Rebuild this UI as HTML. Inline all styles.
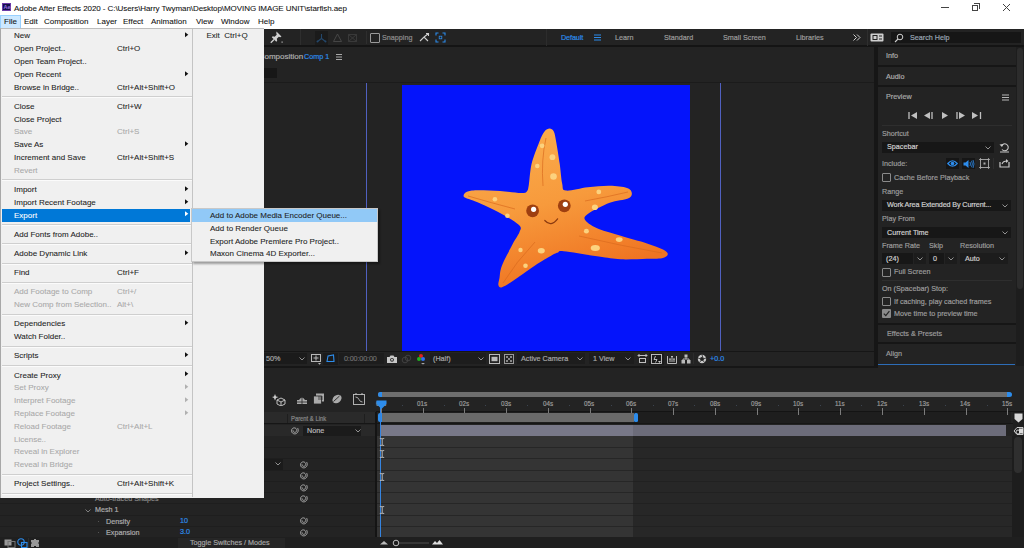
<!DOCTYPE html><html><head><meta charset="utf-8"><style>
*{margin:0;padding:0;box-sizing:border-box}
html,body{width:1024px;height:548px;overflow:hidden;background:#232323;font-family:"Liberation Sans",sans-serif;position:relative}
.a{position:absolute;white-space:nowrap}
.m{font-size:8px;line-height:10px;color:#1e1e1e;-webkit-text-stroke:0.08px currentColor}
.ae{font-size:8px;line-height:10px;color:#a0a0a0;transform:scaleX(.9);transform-origin:0 0;-webkit-text-stroke:0.2px currentColor}
.s7{font-size:7px;line-height:10px}
.bl{color:#2d8ceb}
</style></head><body><div class="a" style="left:0px;top:29px;width:1024px;height:17px;background:#232323;"></div>
<div class="a" style="left:0px;top:45px;width:1024px;height:1.6px;background:#141414;"></div>
<svg class="a" style="left:269px;top:30px;" width="15" height="14" viewBox="0 0 15 14"><path d="M7.5 1.5L12.5 6.5L11.3 7.2L9.8 6.8L7.8 8.8L8.2 10.8L7.3 11.7L2.8 7.2L3.7 6.3L5.7 6.7L7.7 4.7L7.3 3.2Z" fill="#cfcfcf"/><path d="M5 9.5L1.8 12.7" stroke="#cfcfcf" stroke-width="1.3"/><rect x="12.5" y="11.5" width="1.2" height="1.2" fill="#bbb"/></svg>
<div class="a" style="left:300px;top:29px;width:1px;height:16px;background:#2e2e2e;"></div>
<div class="a" style="left:315px;top:31px;width:13px;height:14px;background:#1b1b1b;"></div>
<svg class="a" style="left:316px;top:33px;" width="11" height="10" viewBox="0 0 11 10"><path d="M5.5 1V5.5M5.5 5.5L1.5 8.5M5.5 5.5L9.5 8.5" stroke="#24486c" stroke-width="1.1" fill="none"/><circle cx="1.5" cy="8.5" r="1" fill="#24486c"/><circle cx="9.5" cy="8.5" r="1" fill="#24486c"/></svg>
<svg class="a" style="left:332px;top:33px;" width="11" height="10" viewBox="0 0 11 10"><path d="M5.5 1L1.5 8.5H9.5Z" stroke="#4a4a4a" stroke-width="0.9" fill="none"/></svg>
<svg class="a" style="left:347px;top:33px;" width="11" height="10" viewBox="0 0 11 10"><path d="M1.5 1.5L9.5 8.5M9.5 1.5L1.5 8.5M1.5 1.5H9.5V8.5H1.5Z" stroke="#3c3c3c" stroke-width="0.9" fill="none"/></svg>
<div class="a" style="left:365.5px;top:31px;width:1px;height:13px;background:#2e2e2e;"></div>
<div class="a" style="left:370px;top:33px;width:10px;height:10px;background:transparent;border:1px solid #9a9a9a;border-radius:1px"></div>
<div class="a ae" style="left:382px;top:33.20px;color:#8e8e8e">Snapping</div>
<svg class="a" style="left:419px;top:32px;" width="11" height="11" viewBox="0 0 11 11"><path d="M1 9L5 5L9 9M5 5L9.5 1.5M7 1.5H9.5V4" stroke="#cfcfcf" stroke-width="1.1" fill="none"/></svg>
<svg class="a" style="left:435px;top:32px;" width="11" height="11" viewBox="0 0 11 11"><path d="M1 3.5V1H3.5M7.5 1H10V3.5M10 7.5V10H7.5M3.5 10H1V7.5" stroke="#2d8ceb" stroke-width="1.1" fill="none"/><rect x="4.2" y="4.2" width="2.6" height="2.6" fill="none" stroke="#2d8ceb" stroke-width="0.8"/></svg>
<div class="a" style="left:545.5px;top:29px;width:1px;height:16.5px;background:#2c2c2c;"></div>
<div class="a ae bl" style="left:561px;top:33.20px;letter-spacing:-0.1px">Default</div>
<svg class="a" style="left:594px;top:34px;" width="7" height="7" viewBox="0 0 7 7"><path d="M0 1H7M0 3.5H7M0 6H7" stroke="#2d8ceb" stroke-width="1"/></svg>
<div class="a ae" style="left:615px;top:33.20px;color:#9c9c9c">Learn</div>
<div class="a ae" style="left:664px;top:33.20px;color:#9c9c9c">Standard</div>
<div class="a ae" style="left:723px;top:33.20px;color:#9c9c9c">Small Screen</div>
<div class="a ae" style="left:796px;top:33.20px;color:#9c9c9c">Libraries</div>
<svg class="a" style="left:853px;top:34px;" width="8" height="7" viewBox="0 0 8 7"><path d="M0.5 0.5L3.5 3.5L0.5 6.5M4 0.5L7 3.5L4 6.5" stroke="#d0d0d0" stroke-width="1" fill="none"/></svg>
<div class="a" style="left:867px;top:29px;width:1px;height:16.5px;background:#2e2e2e;"></div>
<svg class="a" style="left:870px;top:33px;" width="14" height="9" viewBox="0 0 14 9"><rect x="0.5" y="0.5" width="13" height="8" rx="1" fill="#cfcfcf"/><rect x="3" y="2.5" width="4" height="4" fill="none" stroke="#232323" stroke-width="1"/><path d="M9 3H12M9 6H12" stroke="#232323"/></svg>
<div class="a" style="left:891px;top:32px;width:130px;height:11px;background:#161616;"></div>
<svg class="a" style="left:894px;top:33px;" width="10" height="10" viewBox="0 0 10 10"><circle cx="6" cy="4" r="2.8" fill="none" stroke="#cfcfcf" stroke-width="1"/><path d="M4 6L1 9" stroke="#cfcfcf" stroke-width="1.1"/></svg>
<div class="a ae" style="left:910px;top:33.20px;color:#9aa6b4">Search Help</div>
<div class="a" style="left:264px;top:47px;width:612px;height:304px;background:#232323;"></div>
<div class="a ae" style="left:258.7px;top:51.50px;color:#adadad;transform:none">Composition</div>
<div class="a ae bl" style="left:304px;top:51.50px;">Comp 1</div>
<svg class="a" style="left:336px;top:54px;" width="6" height="6" viewBox="0 0 6 6"><path d="M0 0.5H6M0 3H6M0 5.5H6" stroke="#b8b8b8" stroke-width="0.9"/></svg>
<div class="a" style="left:250px;top:68px;width:27px;height:10px;background:#171717;"></div>
<div class="a" style="left:264px;top:81.5px;width:612px;height:1.2px;background:#1b1b1b;"></div>
<div class="a" style="left:366px;top:83px;width:1px;height:268px;background:#5060c0;"></div>
<div class="a" style="left:720px;top:83px;width:1px;height:268px;background:#5060c0;"></div>
<div class="a" style="left:402px;top:85px;width:288px;height:266px;background:#0414fb;"></div>
<div class="a" style="left:0px;top:350.5px;width:876px;height:1.8px;background:#161616;"></div>
<div class="a" style="left:264px;top:352px;width:612px;height:14px;background:#232323;"></div>
<div class="a" style="left:250px;top:353px;width:57px;height:11px;background:#1b1b1b;"></div>
<div class="a ae" style="left:266px;top:353.50px;color:#a6a6a6">50%</div>
<svg class="a" style="left:299px;top:357px;" width="6" height="4" viewBox="0 0 6 4"><path d="M0.5 0.5L3 3L5.5 0.5" fill="none" stroke="#a0a0a0" stroke-width="0.9"/></svg>
<svg class="a" style="left:310px;top:353px;" width="13" height="12" viewBox="0 0 13 12"><rect x="1.5" y="1.5" width="9" height="7" fill="none" stroke="#b8b8b8" stroke-width="1"/><path d="M6 2.5V7.5M3.5 5H8.5" stroke="#b8b8b8" stroke-width="1"/><path d="M8 10H11L9.5 11.8Z" fill="#b8b8b8"/></svg>
<div class="a" style="left:323px;top:352.5px;width:15px;height:12px;background:#1b1b1b;"></div>
<svg class="a" style="left:325px;top:354px;" width="11" height="9" viewBox="0 0 11 9"><path d="M2 7.5L3 2L8.5 1L9 7.5Z" fill="none" stroke="#2d8ceb" stroke-width="1.1"/></svg>
<div class="a" style="left:339px;top:353px;width:45px;height:11px;background:#1d1d1d;"></div>
<div class="a ae" style="left:344px;top:353.50px;color:#6e6e6e;letter-spacing:-0.15px">0:00:00:00</div>
<svg class="a" style="left:386px;top:354px;" width="12" height="10" viewBox="0 0 12 10"><path d="M1 3H3.5L4.5 1.5H7.5L8.5 3H11V9H1Z" fill="#c8c8c8"/><circle cx="6" cy="5.8" r="1.9" fill="#232323"/><circle cx="6" cy="5.8" r="1" fill="#c8c8c8"/></svg>
<svg class="a" style="left:401px;top:354px;" width="11" height="10" viewBox="0 0 11 10"><circle cx="4" cy="6" r="2.8" fill="none" stroke="#444" stroke-width="0.9"/><circle cx="7" cy="4" r="2.8" fill="none" stroke="#444" stroke-width="0.9"/></svg>
<svg class="a" style="left:416px;top:353px;" width="10" height="12" viewBox="0 0 10 12"><circle cx="5" cy="3" r="2" fill="#e02020"/><circle cx="3" cy="6" r="2" fill="#20b020"/><circle cx="7" cy="6" r="2" fill="#3070f0"/><path d="M5 10H9L7 11.5Z" fill="#aaa"/></svg>
<div class="a" style="left:430px;top:353px;width:56px;height:11px;background:#1d1d1d;"></div>
<div class="a ae" style="left:433px;top:353.50px;color:#a6a6a6">(Half)</div>
<svg class="a" style="left:478px;top:357px;" width="6" height="4" viewBox="0 0 6 4"><path d="M0.5 0.5L3 3L5.5 0.5" fill="none" stroke="#a0a0a0" stroke-width="0.9"/></svg>
<svg class="a" style="left:489px;top:354px;" width="11" height="10" viewBox="0 0 11 10"><rect x="0.5" y="0.5" width="10" height="9" fill="none" stroke="#bbb" stroke-width="1"/><rect x="2.5" y="2.8" width="6" height="4.4" fill="#bbb"/></svg>
<svg class="a" style="left:504px;top:354px;" width="10" height="10" viewBox="0 0 10 10"><rect x="0.5" y="0.5" width="9" height="9" fill="none" stroke="#999" stroke-width="1"/><path d="M2 2h2v2h-2zM6 2h2v2h-2zM4 4h2v2h-2zM2 6h2v2h-2zM6 6h2v2h-2z" fill="#888"/></svg>
<div class="a" style="left:517px;top:353px;width:68px;height:11px;background:#1d1d1d;"></div>
<div class="a ae" style="left:521px;top:353.50px;color:#a6a6a6">Active Camera</div>
<svg class="a" style="left:577px;top:357px;" width="6" height="4" viewBox="0 0 6 4"><path d="M0.5 0.5L3 3L5.5 0.5" fill="none" stroke="#a0a0a0" stroke-width="0.9"/></svg>
<div class="a" style="left:589px;top:353px;width:45px;height:11px;background:#1d1d1d;"></div>
<div class="a ae" style="left:593px;top:353.50px;color:#a6a6a6">1 View</div>
<svg class="a" style="left:625px;top:357px;" width="6" height="4" viewBox="0 0 6 4"><path d="M0.5 0.5L3 3L5.5 0.5" fill="none" stroke="#a0a0a0" stroke-width="0.9"/></svg>
<svg class="a" style="left:637px;top:353px;" width="11" height="11" viewBox="0 0 11 11"><path d="M1 2.5H10M2.5 1L1 2.5L2.5 4M8.5 1L10 2.5L8.5 4" stroke="#c0c0c0" stroke-width="1" fill="none"/><rect x="2.5" y="5.5" width="6" height="4" fill="none" stroke="#c0c0c0" stroke-width="1"/></svg>
<div class="a" style="left:649px;top:352.5px;width:15px;height:12px;background:#1b1b1b;"></div>
<svg class="a" style="left:651px;top:354px;" width="11" height="10" viewBox="0 0 11 10"><rect x="0.5" y="0.5" width="10" height="9" fill="none" stroke="#c8c8c8" stroke-width="0.9"/><path d="M4.5 2L3 5.5H6L4.5 8.5" stroke="#c8c8c8" stroke-width="0.9" fill="none"/><path d="M7 7H10L8.5 9Z" fill="#c8c8c8"/></svg>
<svg class="a" style="left:667px;top:354px;" width="10" height="10" viewBox="0 0 10 10"><path d="M0.5 2V9.5H9.5V2M3 5V8M5 2.5V8M7 5V8" stroke="#bbb" stroke-width="1" fill="none"/><path d="M2 5H4M6 5H8M4 2.5H6" stroke="#bbb" stroke-width="1"/></svg>
<svg class="a" style="left:681px;top:354px;" width="10" height="10" viewBox="0 0 10 10"><rect x="3.5" y="0.5" width="3" height="3" fill="#bbb"/><rect x="0.5" y="6" width="3.5" height="3.5" fill="#bbb"/><rect x="6" y="6" width="3.5" height="3.5" fill="#bbb"/><path d="M5 3.5V5M2 6V5H8V6" stroke="#bbb" fill="none"/></svg>
<div class="a" style="left:693px;top:353px;width:1px;height:11px;background:#2c2c2c;"></div>
<svg class="a" style="left:697px;top:353.5px;" width="10" height="10" viewBox="0 0 10 10"><circle cx="5" cy="5" r="4.2" fill="#c8c8c8"/><circle cx="5" cy="5" r="2" fill="#232323"/><path d="M5 0.8L5.6 3M9 4L6.8 4.8M7.5 8.5L6 6.5M2.5 8.5L4 6.5M1 4L3.2 4.8" stroke="#232323" stroke-width="0.8"/></svg>
<div class="a ae bl" style="left:710px;top:353.50px;">+0.0</div>
<div class="a" style="left:0px;top:366px;width:876px;height:2px;background:#161616;"></div>
<div class="a" style="left:264px;top:368px;width:612px;height:0px;background:#232323;"></div>
<div class="a" style="left:874px;top:47px;width:4px;height:321px;background:#161616;"></div>
<div class="a" style="left:878px;top:47px;width:138px;height:18px;background:#232323;"></div>
<div class="a ae" style="left:886px;top:51.30px;color:#adadad">Info</div>
<div class="a" style="left:878px;top:65px;width:138px;height:1.5px;background:#161616;"></div>
<div class="a" style="left:878px;top:66.5px;width:138px;height:18.5px;background:#232323;"></div>
<div class="a ae" style="left:886px;top:71.50px;color:#adadad">Audio</div>
<div class="a" style="left:878px;top:85px;width:138px;height:1.5px;background:#161616;"></div>
<div class="a ae" style="left:886px;top:92.00px;color:#a8a8a8">Preview</div>
<svg class="a" style="left:1002px;top:94px;" width="7" height="7" viewBox="0 0 7 7"><path d="M0 1H7M0 3.5H7M0 6H7" stroke="#b8b8b8" stroke-width="1"/></svg>
<svg class="a" style="left:908px;top:111px;" width="76" height="9" viewBox="0 0 76 9"><path d="M1 1V8" stroke="#c0c0c0" stroke-width="1.3"/><path d="M9 1L3 4.5L9 8Z" fill="#c0c0c0"/><path d="M22 1L16 4.5L22 8Z" fill="#c0c0c0"/><path d="M24 1V8" stroke="#c0c0c0" stroke-width="1.3"/><path d="M34 1L40 4.5L34 8Z" fill="#c0c0c0"/><path d="M49 1V8" stroke="#c0c0c0" stroke-width="1.3"/><path d="M51 1L57 4.5L51 8Z" fill="#c0c0c0"/><path d="M64 1L70 4.5L64 8Z" fill="#c0c0c0"/><path d="M72.5 1V8" stroke="#c0c0c0" stroke-width="1.3"/></svg>
<div class="a" style="left:882px;top:125px;width:130px;height:1px;background:#2e2e2e;"></div>
<div class="a ae" style="left:882px;top:129.20px;color:#9c9c9c">Shortcut</div>
<div class="a" style="left:882px;top:142px;width:112px;height:11px;background:#171717;"></div>
<div class="a ae" style="left:887px;top:142.30px;color:#cfcfcf">Spacebar</div>
<svg class="a" style="left:985px;top:146px;" width="6" height="4" viewBox="0 0 6 4"><path d="M0.5 0.5L3 3L5.5 0.5" fill="none" stroke="#a0a0a0" stroke-width="0.9"/></svg>
<svg class="a" style="left:999px;top:142px;" width="11" height="11" viewBox="0 0 11 11"><path d="M2.5 4A3.5 3.5 0 1 1 3 7.5" stroke="#c8c8c8" stroke-width="1.1" fill="none"/><path d="M0.5 2.5L3 5L4.5 2Z" fill="#c8c8c8"/><path d="M1 10H10" stroke="#c8c8c8" stroke-width="1"/></svg>
<div class="a ae" style="left:882px;top:158.80px;color:#9c9c9c">Include:</div>
<div class="a" style="left:946px;top:158px;width:13px;height:11px;background:#161616;"></div>
<svg class="a" style="left:947px;top:159px;" width="11" height="9" viewBox="0 0 11 9"><path d="M0.8 4.5Q5.5 -1 10.2 4.5Q5.5 10 0.8 4.5Z" fill="none" stroke="#2d8ceb" stroke-width="1.2"/><circle cx="5.5" cy="4.6" r="1.8" fill="#2d8ceb"/></svg>
<div class="a" style="left:962px;top:158px;width:13px;height:11px;background:#161616;"></div>
<svg class="a" style="left:963px;top:158.5px;" width="12" height="10" viewBox="0 0 12 10"><path d="M0.5 3.5H2.5L5.5 1V9L2.5 6.5H0.5Z" fill="#2d8ceb"/><path d="M7 3Q8 5 7 7M8.5 1.8Q10.3 5 8.5 8.2M10 1Q12 5 10 9" stroke="#2d8ceb" stroke-width="0.8" fill="none"/></svg>
<svg class="a" style="left:979px;top:158px;" width="11" height="11" viewBox="0 0 11 11"><rect x="1.5" y="1.5" width="8" height="8" fill="none" stroke="#aaa" stroke-width="0.9"/><rect x="4.5" y="4.5" width="2" height="2" fill="#aaa"/><path d="M0 1.5H3M8 1.5H11M0 9.5H3M8 9.5H11M1.5 0V3M9.5 0V3M1.5 8V11M9.5 8V11" stroke="#aaa" stroke-width="0.8"/></svg>
<div class="a" style="left:993px;top:158px;width:1px;height:11px;background:#2e2e2e;"></div>
<svg class="a" style="left:999px;top:158px;" width="11" height="10" viewBox="0 0 11 10"><path d="M1 4V9H10V4" stroke="#c8c8c8" stroke-width="1.2" fill="none"/><path d="M3 6Q4 3 8 3" stroke="#c8c8c8" stroke-width="1.1" fill="none"/><path d="M7 1L9.5 3L7 5Z" fill="#c8c8c8"/></svg>
<div class="a" style="left:882px;top:173px;width:9px;height:9px;background:transparent;border:1px solid #8a8a8a;border-radius:1px"></div>
<div class="a ae" style="left:894px;top:172.50px;color:#9c9c9c">Cache Before Playback</div>
<div class="a ae" style="left:882px;top:187.00px;color:#9c9c9c">Range</div>
<div class="a" style="left:882px;top:200px;width:129px;height:10.5px;background:#171717;"></div>
<div class="a ae" style="left:887px;top:200.30px;color:#cfcfcf;letter-spacing:-0.15px">Work Area Extended By Current...</div>
<svg class="a" style="left:1002px;top:204px;" width="6" height="4" viewBox="0 0 6 4"><path d="M0.5 0.5L3 3L5.5 0.5" fill="none" stroke="#a0a0a0" stroke-width="0.9"/></svg>
<div class="a ae" style="left:882px;top:214.00px;color:#9c9c9c">Play From</div>
<div class="a" style="left:882px;top:227px;width:129px;height:11px;background:#171717;"></div>
<div class="a ae" style="left:887px;top:227.70px;color:#cfcfcf">Current Time</div>
<svg class="a" style="left:1002px;top:231px;" width="6" height="4" viewBox="0 0 6 4"><path d="M0.5 0.5L3 3L5.5 0.5" fill="none" stroke="#a0a0a0" stroke-width="0.9"/></svg>
<div class="a ae" style="left:882px;top:240.80px;color:#9c9c9c">Frame Rate</div>
<div class="a ae" style="left:929px;top:240.80px;color:#9c9c9c">Skip</div>
<div class="a ae" style="left:960px;top:240.80px;color:#9c9c9c">Resolution</div>
<div class="a" style="left:882px;top:253px;width:31px;height:11px;background:#171717;"></div>
<div class="a" style="left:914px;top:253px;width:12px;height:11px;background:#1c1c1c;"></div>
<div class="a ae" style="left:886px;top:253.50px;color:#cfcfcf">(24)</div>
<svg class="a" style="left:917px;top:257px;" width="6" height="4" viewBox="0 0 6 4"><path d="M0.5 0.5L3 3L5.5 0.5" fill="none" stroke="#a0a0a0" stroke-width="0.9"/></svg>
<div class="a" style="left:929px;top:253px;width:15px;height:11px;background:#171717;"></div>
<div class="a" style="left:945px;top:253px;width:12px;height:11px;background:#1c1c1c;"></div>
<div class="a ae" style="left:933px;top:253.50px;color:#cfcfcf">0</div>
<svg class="a" style="left:948px;top:257px;" width="6" height="4" viewBox="0 0 6 4"><path d="M0.5 0.5L3 3L5.5 0.5" fill="none" stroke="#a0a0a0" stroke-width="0.9"/></svg>
<div class="a" style="left:960px;top:253px;width:48px;height:11px;background:#1c1c1c;"></div>
<div class="a ae" style="left:965px;top:253.70px;color:#cfcfcf">Auto</div>
<svg class="a" style="left:999px;top:257px;" width="6" height="4" viewBox="0 0 6 4"><path d="M0.5 0.5L3 3L5.5 0.5" fill="none" stroke="#a0a0a0" stroke-width="0.9"/></svg>
<div class="a" style="left:882px;top:268px;width:9px;height:9px;background:transparent;border:1px solid #8a8a8a;border-radius:1px"></div>
<div class="a ae" style="left:894px;top:267.30px;color:#9c9c9c">Full Screen</div>
<div class="a" style="left:882px;top:280px;width:130px;height:1px;background:#2e2e2e;"></div>
<div class="a ae" style="left:882px;top:284.00px;color:#9c9c9c">On (Spacebar) Stop:</div>
<div class="a" style="left:882px;top:297px;width:9px;height:9px;background:transparent;border:1px solid #8a8a8a;border-radius:1px"></div>
<div class="a ae" style="left:894px;top:296.60px;color:#9c9c9c">If caching, play cached frames</div>
<div class="a" style="left:882px;top:309px;width:9px;height:9px;background:#8a8a8a;border-radius:1px"></div>
<svg class="a" style="left:882px;top:309px;" width="9" height="9" viewBox="0 0 9 9"><path d="M1.8 4.6L3.8 6.6L7.4 2.2" stroke="#232323" stroke-width="1.2" fill="none"/></svg>
<div class="a ae" style="left:894px;top:308.60px;color:#9c9c9c">Move time to preview time</div>
<div class="a" style="left:878px;top:323px;width:138px;height:2px;background:#161616;"></div>
<div class="a ae" style="left:887px;top:328.70px;color:#9c9c9c">Effects &amp; Presets</div>
<div class="a" style="left:878px;top:342px;width:138px;height:2px;background:#161616;"></div>
<div class="a ae" style="left:886px;top:348.80px;color:#9c9c9c">Align</div>
<div class="a" style="left:878px;top:364px;width:137px;height:1.3px;background:#2d6db8;"></div>
<div class="a" style="left:1015.5px;top:47px;width:8.5px;height:319px;background:#1d1d1d;"></div>
<div class="a" style="left:1016.5px;top:48px;width:6px;height:241px;background:#2c2c2c;border-radius:3px"></div>
<div class="a" style="left:0px;top:368px;width:1024px;height:169px;background:#232323;"></div>
<svg class="a" style="left:272px;top:393px;" width="14" height="13" viewBox="0 0 14 13"><path d="M3 1L4 3.5L6.5 4L4 5L3 7.5L2 5L0 4L2 3.5Z" fill="#cfcfcf"/><path d="M5 7L9 5L13 7V11L9 13L5 11Z" fill="none" stroke="#cfcfcf" stroke-width="0.9"/><path d="M5 7L9 9L13 7M9 9V13" stroke="#cfcfcf" stroke-width="0.9" fill="none"/></svg>
<svg class="a" style="left:295px;top:394px;" width="14" height="11" viewBox="0 0 14 11"><path d="M2 6H12V10H2Z" fill="#aaa"/><path d="M4 6Q7 1 10 6" fill="#aaa"/><path d="M7 1V10M2 8H12" stroke="#232323" stroke-width="0.8"/></svg>
<svg class="a" style="left:313px;top:393px;" width="12" height="12" viewBox="0 0 12 12"><rect x="3" y="0.5" width="8" height="8" fill="#aaa"/><rect x="0.5" y="3" width="8" height="8" fill="#aaa" stroke="#232323" stroke-width="0.8"/><path d="M5 4H10M5 6H10" stroke="#232323" stroke-width="0.7"/></svg>
<svg class="a" style="left:331px;top:393px;" width="12" height="12" viewBox="0 0 12 12"><ellipse cx="6" cy="6" rx="5" ry="3.8" transform="rotate(-40 6 6)" fill="#aaa"/><path d="M2.5 8.5L8.5 3" stroke="#232323" stroke-width="0.9"/></svg>
<svg class="a" style="left:353px;top:393px;" width="12" height="12" viewBox="0 0 12 12"><rect x="0.5" y="1.5" width="11" height="10" fill="none" stroke="#c0c0c0" stroke-width="0.9"/><path d="M2.5 4Q5 4 6 6.5Q7 9 9.5 9" stroke="#c0c0c0" stroke-width="0.9" fill="none"/><path d="M3 0V2M9 0V2" stroke="#c0c0c0"/></svg>
<div class="a" style="left:378px;top:392px;width:631px;height:5px;background:#6e6e6e;border-radius:2px"></div>
<div class="a" style="left:377.5px;top:391.8px;width:4px;height:5.4px;background:#2d8ceb;border-radius:2.5px 0 0 2.5px"></div>
<div class="a" style="left:1007px;top:391.8px;width:5px;height:5.4px;background:#2d8ceb;border-radius:0 2.5px 2.5px 0"></div>
<div class="a ae s7" style="left:375.5px;top:399.00px;color:#9c9c9c">00s</div>
<div class="a" style="left:401.9px;top:405px;width:1px;height:1px;background:#3c4450;"></div>
<div class="a ae s7" style="left:417.2733333333333px;top:399.00px;color:#9c9c9c">01s</div>
<div class="a" style="left:443.7px;top:405px;width:1px;height:1px;background:#3c4450;"></div>
<div class="a ae s7" style="left:459.0466666666667px;top:399.00px;color:#9c9c9c">02s</div>
<div class="a" style="left:485.4px;top:405px;width:1px;height:1px;background:#3c4450;"></div>
<div class="a ae s7" style="left:500.82px;top:399.00px;color:#9c9c9c">03s</div>
<div class="a" style="left:527.2px;top:405px;width:1px;height:1px;background:#3c4450;"></div>
<div class="a ae s7" style="left:542.5933333333334px;top:399.00px;color:#9c9c9c">04s</div>
<div class="a" style="left:569.0px;top:405px;width:1px;height:1px;background:#3c4450;"></div>
<div class="a ae s7" style="left:584.3666666666667px;top:399.00px;color:#9c9c9c">05s</div>
<div class="a" style="left:610.8px;top:405px;width:1px;height:1px;background:#3c4450;"></div>
<div class="a ae s7" style="left:626.14px;top:399.00px;color:#9c9c9c">06s</div>
<div class="a" style="left:652.5px;top:405px;width:1px;height:1px;background:#3c4450;"></div>
<div class="a ae s7" style="left:667.9133333333334px;top:399.00px;color:#9c9c9c">07s</div>
<div class="a" style="left:694.3px;top:405px;width:1px;height:1px;background:#3c4450;"></div>
<div class="a ae s7" style="left:709.6866666666667px;top:399.00px;color:#9c9c9c">08s</div>
<div class="a" style="left:736.1px;top:405px;width:1px;height:1px;background:#3c4450;"></div>
<div class="a ae s7" style="left:751.46px;top:399.00px;color:#9c9c9c">09s</div>
<div class="a" style="left:777.8px;top:405px;width:1px;height:1px;background:#3c4450;"></div>
<div class="a ae s7" style="left:793.2333333333333px;top:399.00px;color:#9c9c9c">10s</div>
<div class="a" style="left:819.6px;top:405px;width:1px;height:1px;background:#3c4450;"></div>
<div class="a ae s7" style="left:835.0066666666667px;top:399.00px;color:#9c9c9c">11s</div>
<div class="a" style="left:861.4px;top:405px;width:1px;height:1px;background:#3c4450;"></div>
<div class="a ae s7" style="left:876.78px;top:399.00px;color:#9c9c9c">12s</div>
<div class="a" style="left:903.2px;top:405px;width:1px;height:1px;background:#3c4450;"></div>
<div class="a ae s7" style="left:918.5533333333333px;top:399.00px;color:#9c9c9c">13s</div>
<div class="a" style="left:944.9px;top:405px;width:1px;height:1px;background:#3c4450;"></div>
<div class="a ae s7" style="left:960.3266666666667px;top:399.00px;color:#9c9c9c">14s</div>
<div class="a" style="left:986.7px;top:405px;width:1px;height:1px;background:#3c4450;"></div>
<div class="a ae s7" style="left:1002.1px;top:399.00px;color:#9c9c9c">15s</div>
<div class="a" style="left:376px;top:411.3px;width:648px;height:1px;background:#141414;"></div>
<div class="a" style="left:0px;top:412px;width:376px;height:12px;background:#2a2a2a;"></div>
<div class="a" style="left:287px;top:414px;width:1px;height:9px;background:#1e1e1e;"></div>
<div class="a" style="left:364px;top:414px;width:1px;height:9px;background:#1e1e1e;"></div>
<div class="a ae s7" style="left:290.5px;top:413.50px;color:#888;font-size:6.5px">Parent &amp; Link</div>
<div class="a" style="left:378px;top:412px;width:633px;height:11px;background:#1e1e1e;"></div>
<div class="a" style="left:380.7px;top:408px;width:1px;height:6.5px;background:#7c7c7c;"></div>
<div class="a" style="left:422.5px;top:408px;width:1px;height:6.5px;background:#7c7c7c;"></div>
<div class="a" style="left:464.2px;top:408px;width:1px;height:6.5px;background:#7c7c7c;"></div>
<div class="a" style="left:506.0px;top:408px;width:1px;height:6.5px;background:#7c7c7c;"></div>
<div class="a" style="left:547.8px;top:408px;width:1px;height:6.5px;background:#7c7c7c;"></div>
<div class="a" style="left:589.6px;top:408px;width:1px;height:6.5px;background:#7c7c7c;"></div>
<div class="a" style="left:631.3px;top:408px;width:1px;height:6.5px;background:#7c7c7c;"></div>
<div class="a" style="left:673.1px;top:408px;width:1px;height:6.5px;background:#7c7c7c;"></div>
<div class="a" style="left:714.9px;top:408px;width:1px;height:6.5px;background:#7c7c7c;"></div>
<div class="a" style="left:756.7px;top:408px;width:1px;height:6.5px;background:#7c7c7c;"></div>
<div class="a" style="left:798.4px;top:408px;width:1px;height:6.5px;background:#7c7c7c;"></div>
<div class="a" style="left:840.2px;top:408px;width:1px;height:6.5px;background:#7c7c7c;"></div>
<div class="a" style="left:882.0px;top:408px;width:1px;height:6.5px;background:#7c7c7c;"></div>
<div class="a" style="left:923.8px;top:408px;width:1px;height:6.5px;background:#7c7c7c;"></div>
<div class="a" style="left:965.5px;top:408px;width:1px;height:6.5px;background:#7c7c7c;"></div>
<div class="a" style="left:1007.3px;top:408px;width:1px;height:6.5px;background:#7c7c7c;"></div>
<div class="a" style="left:381px;top:413px;width:253px;height:9px;background:#6a6a6a;"></div>
<div class="a" style="left:377.5px;top:413px;width:4px;height:9px;background:#2d8ceb;border-radius:2px 0 0 2px"></div>
<div class="a" style="left:634px;top:413px;width:3.5px;height:9px;background:#2d8ceb;border-radius:1.5px"></div>
<div class="a" style="left:0px;top:423.2px;width:1024px;height:1.3px;background:#161616;"></div>
<div class="a" style="left:0px;top:424.5px;width:376px;height:12px;background:#292929;"></div>
<svg class="a" style="left:290px;top:425.5px;" width="9" height="9" viewBox="0 0 9 9"><path d="M7.49,1.99 L7.79,2.48 L8.02,3.00 L8.17,3.55 L8.24,4.10 L8.22,4.66 L8.12,5.20 L7.94,5.71 L7.69,6.19 L7.38,6.62 L7.01,7.00 L6.59,7.31 L6.14,7.56 L5.66,7.73 L5.16,7.84 L4.66,7.86 L4.17,7.81 L3.69,7.69 L3.24,7.50 L2.83,7.25 L2.46,6.95 L2.15,6.60 L1.90,6.21 L1.71,5.79 L1.58,5.36 L1.52,4.91 L1.53,4.47 L1.60,4.03 L1.74,3.62 L1.93,3.24 L2.17,2.89 L2.46,2.59 L2.79,2.34 L3.14,2.14 L3.52,2.00 L3.90,1.92 L4.29,1.89 L4.68,1.93 L5.05,2.02 L5.40,2.16 L5.71,2.35 L6.00,2.58 L6.24,2.84 L6.43,3.14 L6.58,3.46 L6.68,3.79 L6.73,4.12 L6.72,4.45 L6.67,4.78 L6.57,5.09 L6.43,5.37 L6.25,5.63 L6.04,5.85 L5.80,6.03 L5.54,6.18 L5.27,6.28 L4.99,6.34 L4.71,6.35 L4.43,6.33 L4.17,6.26 L3.92,6.16 L3.70,6.03 L3.51,5.86 L3.34,5.67 L3.21,5.47 L3.11,5.25 L3.05,5.03 L3.02,4.80 L3.03,4.58 L3.07,4.36 L3.14,4.16" fill="none" stroke="#c0c0c0" stroke-width="0.85"/></svg>
<div class="a" style="left:303px;top:425.5px;width:58px;height:10px;background:#1b1b1b;"></div>
<div class="a ae" style="left:307px;top:425.50px;color:#b8b8b8">None</div>
<svg class="a" style="left:355px;top:429px;" width="6" height="4" viewBox="0 0 6 4"><path d="M0.5 0.5L3 3L5.5 0.5" fill="none" stroke="#a0a0a0" stroke-width="0.9"/></svg>
<div class="a" style="left:381px;top:425px;width:625px;height:10.5px;background:#787888;"></div>
<div class="a" style="left:633px;top:425px;width:373px;height:10.5px;background:#6c6c7a;"></div>
<div class="a" style="left:375px;top:412px;width:2px;height:125px;background:#141414;"></div>
<div class="a" style="left:0px;top:436px;width:375px;height:101px;background:#232323;"></div>
<div class="a" style="left:377px;top:436px;width:256px;height:101px;background:#343434;"></div>
<div class="a" style="left:633px;top:436px;width:380px;height:101px;background:#272727;"></div>
<div class="a" style="left:0px;top:447px;width:375px;height:1px;background:#1e1e1e;"></div>
<div class="a" style="left:377px;top:447px;width:256px;height:1px;background:#262626;"></div>
<div class="a" style="left:633px;top:447px;width:380px;height:1px;background:#212121;"></div>
<div class="a" style="left:0px;top:458px;width:375px;height:1px;background:#1e1e1e;"></div>
<div class="a" style="left:377px;top:458px;width:256px;height:1px;background:#262626;"></div>
<div class="a" style="left:633px;top:458px;width:380px;height:1px;background:#212121;"></div>
<div class="a" style="left:0px;top:470px;width:375px;height:1px;background:#1e1e1e;"></div>
<div class="a" style="left:377px;top:470px;width:256px;height:1px;background:#262626;"></div>
<div class="a" style="left:633px;top:470px;width:380px;height:1px;background:#212121;"></div>
<div class="a" style="left:0px;top:481px;width:375px;height:1px;background:#1e1e1e;"></div>
<div class="a" style="left:377px;top:481px;width:256px;height:1px;background:#262626;"></div>
<div class="a" style="left:633px;top:481px;width:380px;height:1px;background:#212121;"></div>
<div class="a" style="left:0px;top:492px;width:375px;height:1px;background:#1e1e1e;"></div>
<div class="a" style="left:377px;top:492px;width:256px;height:1px;background:#262626;"></div>
<div class="a" style="left:633px;top:492px;width:380px;height:1px;background:#212121;"></div>
<div class="a" style="left:0px;top:503px;width:375px;height:1px;background:#1e1e1e;"></div>
<div class="a" style="left:377px;top:503px;width:256px;height:1px;background:#262626;"></div>
<div class="a" style="left:633px;top:503px;width:380px;height:1px;background:#212121;"></div>
<div class="a" style="left:0px;top:515px;width:375px;height:1px;background:#1e1e1e;"></div>
<div class="a" style="left:377px;top:515px;width:256px;height:1px;background:#262626;"></div>
<div class="a" style="left:633px;top:515px;width:380px;height:1px;background:#212121;"></div>
<div class="a" style="left:0px;top:526px;width:375px;height:1px;background:#1e1e1e;"></div>
<div class="a" style="left:377px;top:526px;width:256px;height:1px;background:#262626;"></div>
<div class="a" style="left:633px;top:526px;width:380px;height:1px;background:#212121;"></div>
<div class="a" style="left:0px;top:537px;width:375px;height:1px;background:#1e1e1e;"></div>
<div class="a" style="left:377px;top:537px;width:256px;height:1px;background:#262626;"></div>
<div class="a" style="left:633px;top:537px;width:380px;height:1px;background:#212121;"></div>
<div class="a ae" style="left:95px;top:494.00px;color:#8a8a8a">Auto-traced Shapes</div>
<svg class="a" style="left:85px;top:508.5px;" width="6" height="4" viewBox="0 0 6 4"><path d="M0.5 0.5L3 3L5.5 0.5" fill="none" stroke="#8a8a8a" stroke-width="0.9"/></svg>
<div class="a ae" style="left:95px;top:505.00px;color:#adadad">Mesh 1</div>
<div class="a ae" style="left:106px;top:516.50px;color:#adadad">Density</div>
<div class="a ae bl" style="left:180px;top:516.00px;">10</div>
<div class="a ae" style="left:106px;top:527.50px;color:#adadad">Expansion</div>
<div class="a ae bl" style="left:180px;top:527.20px;">3.0</div>
<div class="a" style="left:98px;top:521px;width:1px;height:1px;background:#555;"></div>
<div class="a" style="left:98px;top:532px;width:1px;height:1px;background:#555;"></div>
<div class="a" style="left:230px;top:459px;width:53px;height:10.5px;background:#1b1b1b;"></div>
<svg class="a" style="left:275px;top:462px;" width="6" height="4" viewBox="0 0 6 4"><path d="M0.5 0.5L3 3L5.5 0.5" fill="none" stroke="#a0a0a0" stroke-width="0.9"/></svg>
<svg class="a" style="left:299px;top:459.5px;" width="9" height="9" viewBox="0 0 9 9"><path d="M7.49,1.99 L7.79,2.48 L8.02,3.00 L8.17,3.55 L8.24,4.10 L8.22,4.66 L8.12,5.20 L7.94,5.71 L7.69,6.19 L7.38,6.62 L7.01,7.00 L6.59,7.31 L6.14,7.56 L5.66,7.73 L5.16,7.84 L4.66,7.86 L4.17,7.81 L3.69,7.69 L3.24,7.50 L2.83,7.25 L2.46,6.95 L2.15,6.60 L1.90,6.21 L1.71,5.79 L1.58,5.36 L1.52,4.91 L1.53,4.47 L1.60,4.03 L1.74,3.62 L1.93,3.24 L2.17,2.89 L2.46,2.59 L2.79,2.34 L3.14,2.14 L3.52,2.00 L3.90,1.92 L4.29,1.89 L4.68,1.93 L5.05,2.02 L5.40,2.16 L5.71,2.35 L6.00,2.58 L6.24,2.84 L6.43,3.14 L6.58,3.46 L6.68,3.79 L6.73,4.12 L6.72,4.45 L6.67,4.78 L6.57,5.09 L6.43,5.37 L6.25,5.63 L6.04,5.85 L5.80,6.03 L5.54,6.18 L5.27,6.28 L4.99,6.34 L4.71,6.35 L4.43,6.33 L4.17,6.26 L3.92,6.16 L3.70,6.03 L3.51,5.86 L3.34,5.67 L3.21,5.47 L3.11,5.25 L3.05,5.03 L3.02,4.80 L3.03,4.58 L3.07,4.36 L3.14,4.16" fill="none" stroke="#c0c0c0" stroke-width="0.85"/></svg>
<svg class="a" style="left:299px;top:471.0px;" width="9" height="9" viewBox="0 0 9 9"><path d="M7.49,1.99 L7.79,2.48 L8.02,3.00 L8.17,3.55 L8.24,4.10 L8.22,4.66 L8.12,5.20 L7.94,5.71 L7.69,6.19 L7.38,6.62 L7.01,7.00 L6.59,7.31 L6.14,7.56 L5.66,7.73 L5.16,7.84 L4.66,7.86 L4.17,7.81 L3.69,7.69 L3.24,7.50 L2.83,7.25 L2.46,6.95 L2.15,6.60 L1.90,6.21 L1.71,5.79 L1.58,5.36 L1.52,4.91 L1.53,4.47 L1.60,4.03 L1.74,3.62 L1.93,3.24 L2.17,2.89 L2.46,2.59 L2.79,2.34 L3.14,2.14 L3.52,2.00 L3.90,1.92 L4.29,1.89 L4.68,1.93 L5.05,2.02 L5.40,2.16 L5.71,2.35 L6.00,2.58 L6.24,2.84 L6.43,3.14 L6.58,3.46 L6.68,3.79 L6.73,4.12 L6.72,4.45 L6.67,4.78 L6.57,5.09 L6.43,5.37 L6.25,5.63 L6.04,5.85 L5.80,6.03 L5.54,6.18 L5.27,6.28 L4.99,6.34 L4.71,6.35 L4.43,6.33 L4.17,6.26 L3.92,6.16 L3.70,6.03 L3.51,5.86 L3.34,5.67 L3.21,5.47 L3.11,5.25 L3.05,5.03 L3.02,4.80 L3.03,4.58 L3.07,4.36 L3.14,4.16" fill="none" stroke="#c0c0c0" stroke-width="0.85"/></svg>
<svg class="a" style="left:299px;top:482.5px;" width="9" height="9" viewBox="0 0 9 9"><path d="M7.49,1.99 L7.79,2.48 L8.02,3.00 L8.17,3.55 L8.24,4.10 L8.22,4.66 L8.12,5.20 L7.94,5.71 L7.69,6.19 L7.38,6.62 L7.01,7.00 L6.59,7.31 L6.14,7.56 L5.66,7.73 L5.16,7.84 L4.66,7.86 L4.17,7.81 L3.69,7.69 L3.24,7.50 L2.83,7.25 L2.46,6.95 L2.15,6.60 L1.90,6.21 L1.71,5.79 L1.58,5.36 L1.52,4.91 L1.53,4.47 L1.60,4.03 L1.74,3.62 L1.93,3.24 L2.17,2.89 L2.46,2.59 L2.79,2.34 L3.14,2.14 L3.52,2.00 L3.90,1.92 L4.29,1.89 L4.68,1.93 L5.05,2.02 L5.40,2.16 L5.71,2.35 L6.00,2.58 L6.24,2.84 L6.43,3.14 L6.58,3.46 L6.68,3.79 L6.73,4.12 L6.72,4.45 L6.67,4.78 L6.57,5.09 L6.43,5.37 L6.25,5.63 L6.04,5.85 L5.80,6.03 L5.54,6.18 L5.27,6.28 L4.99,6.34 L4.71,6.35 L4.43,6.33 L4.17,6.26 L3.92,6.16 L3.70,6.03 L3.51,5.86 L3.34,5.67 L3.21,5.47 L3.11,5.25 L3.05,5.03 L3.02,4.80 L3.03,4.58 L3.07,4.36 L3.14,4.16" fill="none" stroke="#c0c0c0" stroke-width="0.85"/></svg>
<svg class="a" style="left:299px;top:493.5px;" width="9" height="9" viewBox="0 0 9 9"><path d="M7.49,1.99 L7.79,2.48 L8.02,3.00 L8.17,3.55 L8.24,4.10 L8.22,4.66 L8.12,5.20 L7.94,5.71 L7.69,6.19 L7.38,6.62 L7.01,7.00 L6.59,7.31 L6.14,7.56 L5.66,7.73 L5.16,7.84 L4.66,7.86 L4.17,7.81 L3.69,7.69 L3.24,7.50 L2.83,7.25 L2.46,6.95 L2.15,6.60 L1.90,6.21 L1.71,5.79 L1.58,5.36 L1.52,4.91 L1.53,4.47 L1.60,4.03 L1.74,3.62 L1.93,3.24 L2.17,2.89 L2.46,2.59 L2.79,2.34 L3.14,2.14 L3.52,2.00 L3.90,1.92 L4.29,1.89 L4.68,1.93 L5.05,2.02 L5.40,2.16 L5.71,2.35 L6.00,2.58 L6.24,2.84 L6.43,3.14 L6.58,3.46 L6.68,3.79 L6.73,4.12 L6.72,4.45 L6.67,4.78 L6.57,5.09 L6.43,5.37 L6.25,5.63 L6.04,5.85 L5.80,6.03 L5.54,6.18 L5.27,6.28 L4.99,6.34 L4.71,6.35 L4.43,6.33 L4.17,6.26 L3.92,6.16 L3.70,6.03 L3.51,5.86 L3.34,5.67 L3.21,5.47 L3.11,5.25 L3.05,5.03 L3.02,4.80 L3.03,4.58 L3.07,4.36 L3.14,4.16" fill="none" stroke="#c0c0c0" stroke-width="0.85"/></svg>
<svg class="a" style="left:299px;top:516.0px;" width="9" height="9" viewBox="0 0 9 9"><path d="M7.49,1.99 L7.79,2.48 L8.02,3.00 L8.17,3.55 L8.24,4.10 L8.22,4.66 L8.12,5.20 L7.94,5.71 L7.69,6.19 L7.38,6.62 L7.01,7.00 L6.59,7.31 L6.14,7.56 L5.66,7.73 L5.16,7.84 L4.66,7.86 L4.17,7.81 L3.69,7.69 L3.24,7.50 L2.83,7.25 L2.46,6.95 L2.15,6.60 L1.90,6.21 L1.71,5.79 L1.58,5.36 L1.52,4.91 L1.53,4.47 L1.60,4.03 L1.74,3.62 L1.93,3.24 L2.17,2.89 L2.46,2.59 L2.79,2.34 L3.14,2.14 L3.52,2.00 L3.90,1.92 L4.29,1.89 L4.68,1.93 L5.05,2.02 L5.40,2.16 L5.71,2.35 L6.00,2.58 L6.24,2.84 L6.43,3.14 L6.58,3.46 L6.68,3.79 L6.73,4.12 L6.72,4.45 L6.67,4.78 L6.57,5.09 L6.43,5.37 L6.25,5.63 L6.04,5.85 L5.80,6.03 L5.54,6.18 L5.27,6.28 L4.99,6.34 L4.71,6.35 L4.43,6.33 L4.17,6.26 L3.92,6.16 L3.70,6.03 L3.51,5.86 L3.34,5.67 L3.21,5.47 L3.11,5.25 L3.05,5.03 L3.02,4.80 L3.03,4.58 L3.07,4.36 L3.14,4.16" fill="none" stroke="#c0c0c0" stroke-width="0.85"/></svg>
<svg class="a" style="left:299px;top:527.5px;" width="9" height="9" viewBox="0 0 9 9"><path d="M7.49,1.99 L7.79,2.48 L8.02,3.00 L8.17,3.55 L8.24,4.10 L8.22,4.66 L8.12,5.20 L7.94,5.71 L7.69,6.19 L7.38,6.62 L7.01,7.00 L6.59,7.31 L6.14,7.56 L5.66,7.73 L5.16,7.84 L4.66,7.86 L4.17,7.81 L3.69,7.69 L3.24,7.50 L2.83,7.25 L2.46,6.95 L2.15,6.60 L1.90,6.21 L1.71,5.79 L1.58,5.36 L1.52,4.91 L1.53,4.47 L1.60,4.03 L1.74,3.62 L1.93,3.24 L2.17,2.89 L2.46,2.59 L2.79,2.34 L3.14,2.14 L3.52,2.00 L3.90,1.92 L4.29,1.89 L4.68,1.93 L5.05,2.02 L5.40,2.16 L5.71,2.35 L6.00,2.58 L6.24,2.84 L6.43,3.14 L6.58,3.46 L6.68,3.79 L6.73,4.12 L6.72,4.45 L6.67,4.78 L6.57,5.09 L6.43,5.37 L6.25,5.63 L6.04,5.85 L5.80,6.03 L5.54,6.18 L5.27,6.28 L4.99,6.34 L4.71,6.35 L4.43,6.33 L4.17,6.26 L3.92,6.16 L3.70,6.03 L3.51,5.86 L3.34,5.67 L3.21,5.47 L3.11,5.25 L3.05,5.03 L3.02,4.80 L3.03,4.58 L3.07,4.36 L3.14,4.16" fill="none" stroke="#c0c0c0" stroke-width="0.85"/></svg>
<div class="a" style="left:380.2px;top:402px;width:1.3px;height:135px;background:#3584e0;"></div>
<svg class="a" style="left:376px;top:400px;" width="11" height="10" viewBox="0 0 11 10"><path d="M0.5 0.5H10.5V4L5.5 9L0.5 4Z" fill="#2d8ceb"/></svg>
<svg class="a" style="left:378.5px;top:438px;" width="6" height="9" viewBox="0 0 6 9"><path d="M0.8 0.5Q3 1 5.2 0.5M0.8 7.5Q3 7 5.2 7.5M3.2 1V7" stroke="#b4b4b4" stroke-width="1" fill="none"/></svg>
<svg class="a" style="left:378.5px;top:449.5px;" width="6" height="9" viewBox="0 0 6 9"><path d="M0.8 0.5Q3 1 5.2 0.5M0.8 7.5Q3 7 5.2 7.5M3.2 1V7" stroke="#b4b4b4" stroke-width="1" fill="none"/></svg>
<svg class="a" style="left:378.5px;top:472.5px;" width="6" height="9" viewBox="0 0 6 9"><path d="M0.8 0.5Q3 1 5.2 0.5M0.8 7.5Q3 7 5.2 7.5M3.2 1V7" stroke="#b4b4b4" stroke-width="1" fill="none"/></svg>
<svg class="a" style="left:378.5px;top:506px;" width="6" height="9" viewBox="0 0 6 9"><path d="M0.8 0.5Q3 1 5.2 0.5M0.8 7.5Q3 7 5.2 7.5M3.2 1V7" stroke="#b4b4b4" stroke-width="1" fill="none"/></svg>
<div class="a" style="left:1013px;top:412px;width:11px;height:125px;background:#1f1f1f;"></div>
<svg class="a" style="left:1014px;top:413px;" width="9" height="10" viewBox="0 0 9 10"><path d="M0.5 0.5H8.5V6L4.5 9.5L0.5 6Z" fill="#d8d8d8"/></svg>
<svg class="a" style="left:1013px;top:426px;" width="11" height="10" viewBox="0 0 11 10"><path d="M1 5L4 1.5H10V8.5H4Z" fill="none" stroke="#ddd" stroke-width="0.9"/><circle cx="5" cy="6" r="2" fill="none" stroke="#ddd" stroke-width="0.9"/><rect x="6" y="2.5" width="4" height="5" fill="#ddd"/></svg>
<div class="a" style="left:1012px;top:436px;width:12px;height:101px;background:#1d1d1d;"></div>
<div class="a" style="left:1014px;top:437px;width:8px;height:36px;background:#2f2f2f;border-radius:4px"></div>
<div class="a" style="left:0px;top:537px;width:1024px;height:11px;background:#1f1f1f;"></div>
<svg class="a" style="left:4px;top:539px;" width="12" height="9" viewBox="0 0 12 9"><rect x="0.5" y="0.5" width="7" height="6" fill="#999" /><rect x="4" y="2.5" width="7" height="6" fill="none" stroke="#777" stroke-width="1"/></svg>
<svg class="a" style="left:17px;top:538px;" width="11" height="10" viewBox="0 0 11 10"><circle cx="4" cy="4" r="3.2" fill="none" stroke="#2d8ceb" stroke-width="1.1"/><rect x="4.5" y="4.5" width="5.5" height="5" fill="none" stroke="#2d8ceb" stroke-width="1.1"/></svg>
<div class="a" style="left:28px;top:538px;width:1px;height:10px;background:#2c2c2c;"></div>
<svg class="a" style="left:30px;top:538px;" width="10" height="10" viewBox="0 0 10 10"><path d="M1 2H4V1H6V2H9V4L8 5L9 6V9H6V8H4V9H1V6L2 5L1 4Z" fill="#999"/></svg>
<div class="a" style="left:178px;top:538px;width:107px;height:10px;background:#262626;"></div>
<div class="a ae" style="left:190px;top:538.00px;color:#a6a6a6">Toggle Switches / Modes</div>
<svg class="a" style="left:380px;top:540px;" width="8" height="5" viewBox="0 0 8 5"><path d="M0 4.5H8L4 1Z" fill="#bbb"/></svg>
<svg class="a" style="left:391px;top:538px;" width="40" height="10" viewBox="0 0 40 10"><circle cx="5" cy="5" r="2.8" fill="none" stroke="#c0c0c0" stroke-width="1"/><path d="M8 5H38" stroke="#555" stroke-width="0.9"/></svg>
<svg class="a" style="left:432px;top:539px;" width="13" height="6" viewBox="0 0 13 6"><path d="M0 5.5L3 2L5 4L7.5 1L11 5.5Z" fill="#ddd"/></svg>
<svg class="a" style="left:0;top:0" width="1024" height="548" viewBox="0 0 1024 548"><defs><linearGradient id="sg" x1="0" y1="0" x2="0.35" y2="1"><stop offset="0" stop-color="#fbb050"/><stop offset="0.55" stop-color="#f79a3c"/><stop offset="1" stop-color="#ef7422"/></linearGradient><clipPath id="cc"><rect x="402" y="85" width="288" height="266"/></clipPath></defs><g clip-path="url(#cc)"><path d="M549.6,128.6C551.1,128.6 552.7,129.3 553.8,131.5C554.9,133.7 555.2,136.5 556.2,141.9C557.2,147.3 558.7,156.8 559.7,163.8C560.7,170.8 561.2,179.2 562.2,183.7C563.2,188.2 561.7,190.0 566.0,190.6C570.3,191.2 580.5,188.1 587.8,187.3C595.1,186.5 603.2,185.7 609.7,185.8C616.2,185.9 623.3,186.8 627.0,188.0C630.7,189.2 631.6,191.2 631.8,193.0C632.0,194.8 631.7,196.9 628.0,198.5C624.3,200.1 616.4,200.2 609.7,202.8C603.0,205.4 591.8,211.1 587.8,214.0C583.8,216.9 583.7,218.0 585.5,220.5C587.3,223.0 592.9,226.6 598.8,229.1C604.7,231.6 612.7,233.3 620.7,235.7C628.7,238.1 640.0,241.1 647.0,243.4C654.0,245.7 659.5,247.7 663.0,249.5C666.5,251.3 668.0,252.9 667.8,254.3C667.6,255.8 665.5,257.5 662.0,258.2C658.5,258.9 653.9,258.5 647.0,258.7C640.1,258.9 628.7,259.7 620.7,259.3C612.7,258.9 608.3,257.8 598.8,256.5C589.3,255.2 570.6,252.0 563.8,251.3C557.0,250.6 559.9,251.9 558.0,252.5C556.1,253.1 556.2,252.8 552.3,255.0C548.4,257.2 541.3,261.4 534.7,265.7C528.1,270.0 518.2,277.4 512.8,281.0C507.3,284.6 504.4,286.5 502.0,287.2C499.6,287.9 498.8,286.5 498.4,285.0C498.0,283.5 498.9,281.2 499.5,278.0C500.1,274.8 499.7,271.4 501.9,265.7C504.1,260.0 509.9,249.4 512.8,243.8C515.7,238.2 518.5,235.1 519.5,232.0C520.5,228.9 522.2,228.3 519.0,225.1C515.8,221.9 507.0,216.8 500.0,213.0C493.0,209.2 482.6,204.6 476.9,202.1C471.2,199.6 468.2,199.1 466.0,198.0C463.8,196.9 463.4,196.5 463.6,195.5C463.8,194.5 464.8,192.7 467.0,191.8C469.2,190.9 471.4,190.4 476.9,190.3C482.4,190.2 492.6,190.6 500.0,191.0C507.4,191.4 516.5,192.9 521.0,193.0C525.5,193.1 525.5,192.8 526.8,191.5C528.1,190.2 528.0,189.6 528.8,185.0C529.6,180.4 529.9,171.0 531.6,163.8C533.4,156.6 537.1,147.3 539.3,141.9C541.4,136.5 542.8,133.7 544.5,131.5C546.2,129.3 548.1,128.6 549.6,128.6Z" fill="url(#sg)"/><path d="M546 138Q541 160 543 186" stroke="#d8691e" stroke-width="0.8" fill="none" opacity="0.85"/><path d="M468 196Q492 203 515 209" stroke="#d8691e" stroke-width="0.8" fill="none" opacity="0.85"/><path d="M585 201Q607 197 628 192" stroke="#d8691e" stroke-width="0.8" fill="none" opacity="0.85"/><path d="M579 236Q622 246 662 253" stroke="#d8691e" stroke-width="0.8" fill="none" opacity="0.85"/><path d="M535 242Q516 262 503 283" stroke="#d8691e" stroke-width="0.8" fill="none" opacity="0.85"/><ellipse cx="542.1" cy="145.8" rx="2.4" ry="2.4" fill="#fcd27e"/><ellipse cx="552.4" cy="157.2" rx="2.9" ry="2.9" fill="#fcd27e"/><ellipse cx="537.3" cy="166" rx="2.3" ry="2.3" fill="#fcd27e"/><ellipse cx="553.5" cy="176.5" rx="3.3" ry="3.3" fill="#fcd27e"/><ellipse cx="494.9" cy="199.3" rx="2.3" ry="2.3" fill="#fcd27e"/><ellipse cx="507.4" cy="215.8" rx="2.3" ry="2.3" fill="#fcd27e"/><ellipse cx="598.8" cy="191.9" rx="2.4" ry="2.4" fill="#fcd27e"/><ellipse cx="594.9" cy="207.2" rx="3" ry="2.8" fill="#fcd27e"/><ellipse cx="586.4" cy="231.2" rx="2.5" ry="2.4" fill="#fcd27e"/><ellipse cx="619.2" cy="239.6" rx="3.4" ry="2.3" fill="#fcd27e"/><ellipse cx="595.3" cy="248" rx="4.6" ry="3" fill="#fcd27e"/><ellipse cx="520.5" cy="250" rx="2.2" ry="2.2" fill="#fcd27e"/><ellipse cx="541.3" cy="250.8" rx="3.5" ry="2.7" fill="#fcd27e"/><ellipse cx="525.5" cy="265.7" rx="2.3" ry="2.3" fill="#fcd27e"/><circle cx="532.6" cy="210.8" r="6.4" fill="#9e3f10"/><circle cx="533.6" cy="209.3" r="2.6" fill="#fff"/><circle cx="564.3" cy="205.8" r="6.4" fill="#9e3f10"/><circle cx="565.3" cy="204.3" r="2.6" fill="#fff"/><path d="M544.8 220.5Q551 227.5 557.6 218.8" stroke="#8a3a10" stroke-width="1.2" fill="none" stroke-linecap="round"/></g></svg>
<div class="a" style="left:0px;top:15px;width:1024px;height:14px;background:#ffffff;"></div>
<div class="a" style="left:0px;top:0px;width:1024px;height:15px;background:#ffffff;"></div>
<div class="a" style="left:2px;top:3px;width:9px;height:8px;background:#14104a;border:1px solid #6a3aa8"></div>
<div class="a" style="left:3.5px;top:4px;font-size:5.5px;line-height:6px;color:#9a70e0;font-weight:bold">Ae</div>
<div class="a m" style="left:14px;top:4.00px;color:#111;letter-spacing:-0.07px">Adobe After Effects 2020 - C:\Users\Harry Twyman\Desktop\MOVING IMAGE UNIT\starfish.aep</div>
<div class="a" style="left:941px;top:7px;width:8px;height:1px;background:#444;"></div>
<div class="a" style="left:972px;top:5px;width:6px;height:6px;background:transparent;border:1px solid #444"></div>
<div class="a" style="left:974px;top:3px;width:6px;height:6px;background:transparent;border-top:1px solid #444;border-right:1px solid #444"></div>
<svg class="a" style="left:1002px;top:3px;" width="9" height="9" viewBox="0 0 9 9"><path d="M1 1L8 8M8 1L1 8" stroke="#444" stroke-width="1"/></svg>
<div class="a" style="left:0px;top:15px;width:21px;height:14px;background:#cce8ff;border:1px solid #99d1ff"></div>
<div class="a m" style="left:4px;top:17.20px;color:#111">File</div>
<div class="a m" style="left:24px;top:17.20px;color:#111">Edit</div>
<div class="a m" style="left:44px;top:17.20px;color:#111">Composition</div>
<div class="a m" style="left:97px;top:17.20px;color:#111">Layer</div>
<div class="a m" style="left:123px;top:17.20px;color:#111">Effect</div>
<div class="a m" style="left:151px;top:17.20px;color:#111">Animation</div>
<div class="a m" style="left:196px;top:17.20px;color:#111">View</div>
<div class="a m" style="left:221px;top:17.20px;color:#111">Window</div>
<div class="a m" style="left:258px;top:17.20px;color:#111">Help</div>
<div class="a" style="left:0px;top:28px;width:264px;height:470px;background:#f0f0f0;border-left:1px solid #a8a8a8;border-top:1px solid #bdbdbd"></div>
<div class="a" style="left:192px;top:29px;width:1px;height:468px;background:#c4c4c4;"></div>
<div class="a m" style="left:14px;top:31.30px;color:#1e1e1e">New</div>
<svg class="a" style="left:185px;top:32.2px;" width="4" height="6" viewBox="0 0 4 6"><path d="M0 0.3L3.3 2.8L0 5.3Z" fill="#111"/></svg>
<div class="a m" style="left:14px;top:44.10px;color:#1e1e1e">Open Project..</div>
<div class="a m" style="left:117px;top:44.10px;color:#1e1e1e">Ctrl+O</div>
<div class="a m" style="left:14px;top:56.90px;color:#1e1e1e">Open Team Project..</div>
<div class="a m" style="left:14px;top:69.70px;color:#1e1e1e">Open Recent</div>
<svg class="a" style="left:185px;top:70.6px;" width="4" height="6" viewBox="0 0 4 6"><path d="M0 0.3L3.3 2.8L0 5.3Z" fill="#111"/></svg>
<div class="a m" style="left:14px;top:82.50px;color:#1e1e1e">Browse in Bridge..</div>
<div class="a m" style="left:117px;top:82.50px;color:#1e1e1e">Ctrl+Alt+Shift+O</div>
<div class="a" style="left:2px;top:96.1px;width:190px;height:1px;background:#cfcfcf;"></div>
<div class="a" style="left:2px;top:97.1px;width:190px;height:1px;background:#fbfbfb;"></div>
<div class="a m" style="left:14px;top:101.70px;color:#1e1e1e">Close</div>
<div class="a m" style="left:117px;top:101.70px;color:#1e1e1e">Ctrl+W</div>
<div class="a m" style="left:14px;top:114.50px;color:#1e1e1e">Close Project</div>
<div class="a m" style="left:14px;top:127.30px;color:#a9a9a9">Save</div>
<div class="a m" style="left:117px;top:127.30px;color:#a9a9a9">Ctrl+S</div>
<div class="a m" style="left:14px;top:140.10px;color:#1e1e1e">Save As</div>
<svg class="a" style="left:185px;top:141.0px;" width="4" height="6" viewBox="0 0 4 6"><path d="M0 0.3L3.3 2.8L0 5.3Z" fill="#111"/></svg>
<div class="a m" style="left:14px;top:152.90px;color:#1e1e1e">Increment and Save</div>
<div class="a m" style="left:117px;top:152.90px;color:#1e1e1e">Ctrl+Alt+Shift+S</div>
<div class="a m" style="left:14px;top:165.70px;color:#a9a9a9">Revert</div>
<div class="a" style="left:2px;top:179.3px;width:190px;height:1px;background:#cfcfcf;"></div>
<div class="a" style="left:2px;top:180.3px;width:190px;height:1px;background:#fbfbfb;"></div>
<div class="a m" style="left:14px;top:184.90px;color:#1e1e1e">Import</div>
<svg class="a" style="left:185px;top:185.8px;" width="4" height="6" viewBox="0 0 4 6"><path d="M0 0.3L3.3 2.8L0 5.3Z" fill="#111"/></svg>
<div class="a m" style="left:14px;top:197.70px;color:#1e1e1e">Import Recent Footage</div>
<svg class="a" style="left:185px;top:198.6px;" width="4" height="6" viewBox="0 0 4 6"><path d="M0 0.3L3.3 2.8L0 5.3Z" fill="#111"/></svg>
<div class="a" style="left:2px;top:208.6px;width:188px;height:13.2px;background:#0078d7;"></div>
<div class="a m" style="left:14px;top:210.50px;color:#ffffff">Export</div>
<svg class="a" style="left:185px;top:211.4px;" width="4" height="6" viewBox="0 0 4 6"><path d="M0 0.3L3.3 2.8L0 5.3Z" fill="#fff"/></svg>
<div class="a" style="left:2px;top:224.1px;width:190px;height:1px;background:#cfcfcf;"></div>
<div class="a" style="left:2px;top:225.1px;width:190px;height:1px;background:#fbfbfb;"></div>
<div class="a m" style="left:14px;top:229.70px;color:#1e1e1e">Add Fonts from Adobe..</div>
<div class="a" style="left:2px;top:243.3px;width:190px;height:1px;background:#cfcfcf;"></div>
<div class="a" style="left:2px;top:244.3px;width:190px;height:1px;background:#fbfbfb;"></div>
<div class="a m" style="left:14px;top:248.90px;color:#1e1e1e">Adobe Dynamic Link</div>
<svg class="a" style="left:185px;top:249.8px;" width="4" height="6" viewBox="0 0 4 6"><path d="M0 0.3L3.3 2.8L0 5.3Z" fill="#111"/></svg>
<div class="a" style="left:2px;top:262.5px;width:190px;height:1px;background:#cfcfcf;"></div>
<div class="a" style="left:2px;top:263.5px;width:190px;height:1px;background:#fbfbfb;"></div>
<div class="a m" style="left:14px;top:268.10px;color:#1e1e1e">Find</div>
<div class="a m" style="left:117px;top:268.10px;color:#1e1e1e">Ctrl+F</div>
<div class="a" style="left:2px;top:281.7px;width:190px;height:1px;background:#cfcfcf;"></div>
<div class="a" style="left:2px;top:282.7px;width:190px;height:1px;background:#fbfbfb;"></div>
<div class="a m" style="left:14px;top:287.30px;color:#a9a9a9">Add Footage to Comp</div>
<div class="a m" style="left:117px;top:287.30px;color:#a9a9a9">Ctrl+/</div>
<div class="a m" style="left:14px;top:300.10px;color:#a9a9a9">New Comp from Selection..</div>
<div class="a m" style="left:117px;top:300.10px;color:#a9a9a9">Alt+\</div>
<div class="a" style="left:2px;top:313.7px;width:190px;height:1px;background:#cfcfcf;"></div>
<div class="a" style="left:2px;top:314.7px;width:190px;height:1px;background:#fbfbfb;"></div>
<div class="a m" style="left:14px;top:319.30px;color:#1e1e1e">Dependencies</div>
<svg class="a" style="left:185px;top:320.2px;" width="4" height="6" viewBox="0 0 4 6"><path d="M0 0.3L3.3 2.8L0 5.3Z" fill="#111"/></svg>
<div class="a m" style="left:14px;top:332.10px;color:#1e1e1e">Watch Folder..</div>
<div class="a" style="left:2px;top:345.7px;width:190px;height:1px;background:#cfcfcf;"></div>
<div class="a" style="left:2px;top:346.7px;width:190px;height:1px;background:#fbfbfb;"></div>
<div class="a m" style="left:14px;top:351.30px;color:#1e1e1e">Scripts</div>
<svg class="a" style="left:185px;top:352.2px;" width="4" height="6" viewBox="0 0 4 6"><path d="M0 0.3L3.3 2.8L0 5.3Z" fill="#111"/></svg>
<div class="a" style="left:2px;top:364.9px;width:190px;height:1px;background:#cfcfcf;"></div>
<div class="a" style="left:2px;top:365.9px;width:190px;height:1px;background:#fbfbfb;"></div>
<div class="a m" style="left:14px;top:370.50px;color:#1e1e1e">Create Proxy</div>
<svg class="a" style="left:185px;top:371.4px;" width="4" height="6" viewBox="0 0 4 6"><path d="M0 0.3L3.3 2.8L0 5.3Z" fill="#111"/></svg>
<div class="a m" style="left:14px;top:383.30px;color:#a9a9a9">Set Proxy</div>
<svg class="a" style="left:185px;top:384.2px;" width="4" height="6" viewBox="0 0 4 6"><path d="M0 0.3L3.3 2.8L0 5.3Z" fill="#b0b0b0"/></svg>
<div class="a m" style="left:14px;top:396.10px;color:#a9a9a9">Interpret Footage</div>
<svg class="a" style="left:185px;top:397.0px;" width="4" height="6" viewBox="0 0 4 6"><path d="M0 0.3L3.3 2.8L0 5.3Z" fill="#b0b0b0"/></svg>
<div class="a m" style="left:14px;top:408.90px;color:#a9a9a9">Replace Footage</div>
<svg class="a" style="left:185px;top:409.8px;" width="4" height="6" viewBox="0 0 4 6"><path d="M0 0.3L3.3 2.8L0 5.3Z" fill="#b0b0b0"/></svg>
<div class="a m" style="left:14px;top:421.70px;color:#a9a9a9">Reload Footage</div>
<div class="a m" style="left:117px;top:421.70px;color:#a9a9a9">Ctrl+Alt+L</div>
<div class="a m" style="left:14px;top:434.50px;color:#a9a9a9">License..</div>
<div class="a m" style="left:14px;top:447.30px;color:#a9a9a9">Reveal in Explorer</div>
<div class="a m" style="left:14px;top:460.10px;color:#a9a9a9">Reveal in Bridge</div>
<div class="a" style="left:2px;top:473.7px;width:190px;height:1px;background:#cfcfcf;"></div>
<div class="a" style="left:2px;top:474.7px;width:190px;height:1px;background:#fbfbfb;"></div>
<div class="a m" style="left:14px;top:479.30px;color:#1e1e1e">Project Settings..</div>
<div class="a m" style="left:117px;top:479.30px;color:#1e1e1e">Ctrl+Alt+Shift+K</div>
<div class="a" style="left:2px;top:492.9px;width:190px;height:1px;background:#cfcfcf;"></div>
<div class="a" style="left:2px;top:493.9px;width:190px;height:1px;background:#fbfbfb;"></div>
<div class="a m" style="left:206.5px;top:31.30px;">Exit&nbsp;&nbsp;Ctrl+Q</div>
<div class="a" style="left:191px;top:208px;width:187px;height:53.5px;background:#f0f0f0;border:1px solid #c8c8c8;box-shadow:2px 2px 2px rgba(0,0,0,0.35)"></div>
<div class="a" style="left:192px;top:209px;width:184.5px;height:13px;background:#91c9f7;"></div>
<div class="a m" style="left:210px;top:211.00px;">Add to Adobe Media Encoder Queue...</div>
<div class="a m" style="left:210px;top:223.80px;">Add to Render Queue</div>
<div class="a m" style="left:210px;top:236.60px;">Export Adobe Premiere Pro Project..</div>
<div class="a m" style="left:210px;top:249.40px;">Maxon Cinema 4D Exporter...</div></body></html>
